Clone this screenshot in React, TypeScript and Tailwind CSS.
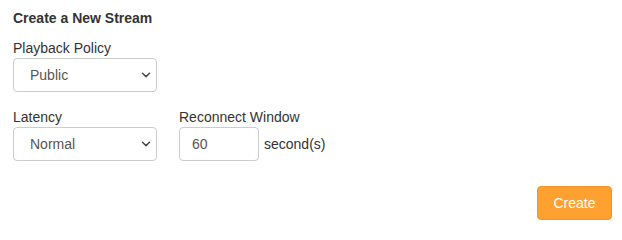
import React from "react";

function Chevron() {
  return (
    <svg className="pointer-events-none absolute right-[6px] top-1/2 -translate-y-1/2" width="10" height="6" viewBox="0 0 10 6">
      <path d="M1.5 1.2 L5 4.6 L8.5 1.2" fill="none" stroke="#4a4a4a" strokeWidth="1.5" strokeLinecap="round" strokeLinejoin="round" />
    </svg>
  );
}

function SelectBox({ value }: { value: string }) {
  return (
    <div className="relative w-[144px]">
      <select
        defaultValue={value}
        className="h-[34px] w-[144px] appearance-none rounded-[4px] border border-[#cccccc] bg-white pl-[16px] pr-[24px] text-[14px] text-[#555555] outline-none"
      >
        <option>{value}</option>
      </select>
      <Chevron />
    </div>
  );
}

export default function App() {
  return (
    <div
      className="h-[232px] w-[622px] bg-white px-[13px] pt-[8px] text-[#333333]"
      style={{ fontFamily: '"Liberation Sans", Arial, sans-serif' }}
    >
      <div className="text-[14px] font-bold leading-[20px]">Create a New Stream</div>
      <div className="mt-[10px] text-[14px] leading-[20px]">Playback Policy</div>
      <SelectBox value="Public" />
      <div className="mt-[15px] flex gap-[22px]">
        <div className="flex flex-col">
          <div className="text-[14px] leading-[20px]">Latency</div>
          <SelectBox value="Normal" />
        </div>
        <div className="flex flex-col">
          <div className="text-[14px] leading-[20px]">Reconnect Window</div>
          <div className="flex items-center gap-[5px]">
            <input
              defaultValue="60"
              className="h-[34px] w-[80px] rounded-[4px] border border-[#cccccc] bg-white px-[12px] text-[14px] text-[#555555] outline-none"
            />
            <span className="text-[14px]">second(s)</span>
          </div>
        </div>
      </div>
      <div className="mt-[25px] flex justify-end">
        <button className="mr-[-3px] h-[34px] w-[75px] rounded-[4px] border border-[#f0952a] bg-[#ffa131] text-[14px] text-white">
          Create
        </button>
      </div>
    </div>
  );
}
